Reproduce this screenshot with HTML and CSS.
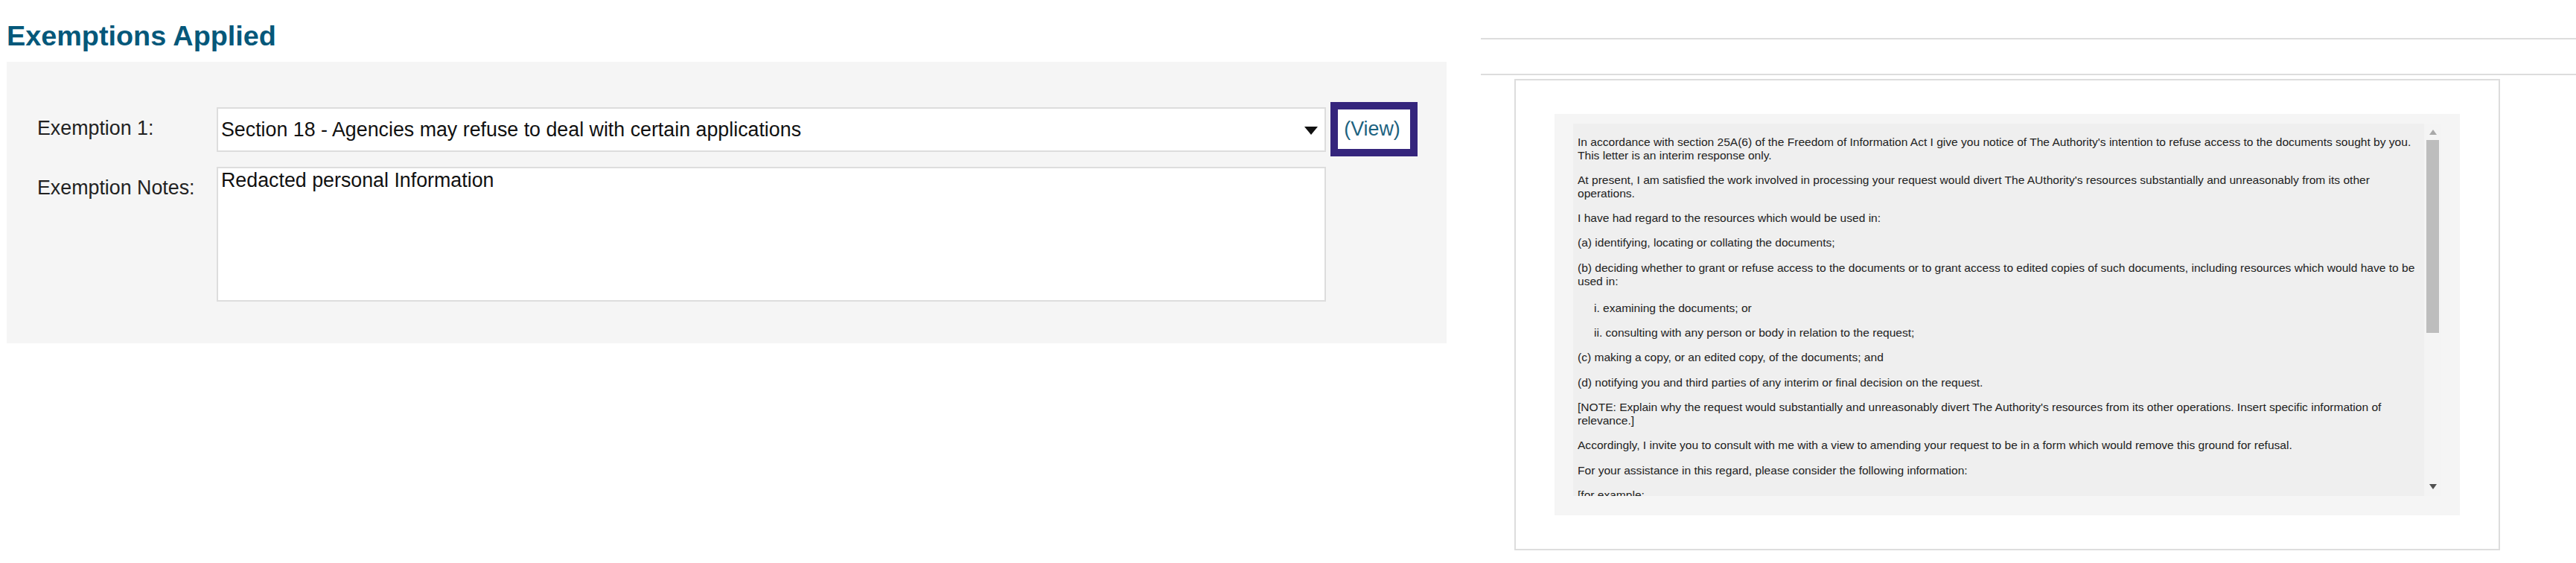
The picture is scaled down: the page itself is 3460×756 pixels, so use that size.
FILE: index.html
```html
<!DOCTYPE html>
<html lang="en">

<head>
    <meta charset="UTF-8">
    <title>Exemptions Applied</title>
    <link rel="stylesheet" href="styles.css">
</head>

<body>
    <div class="page">
        <!-- Exemption form -->
        <div class="form-column">
            <h2 class="section-title">Exemptions Applied</h2>
            <div class="form-panel">
                <div class="form-row">
                    <label class="form-label" for="exemption-1">Exemption 1:</label>
                    <div class="select-wrap">
                        <select id="exemption-1" class="form-select">
                            <option>Section 18 - Agencies may refuse to deal with certain applications</option>
                        </select>
                        <svg class="select-arrow" viewBox="0 0 18 11">
                            <path d="M0 0H18L9 11Z" />
                        </svg>
                    </div>
                    <a class="view-link" href="#">(View)</a>
                </div>
                <div class="form-row notes-row">
                    <label class="form-label" for="exemption-notes">Exemption Notes:</label>
                    <textarea id="exemption-notes" class="form-notes">Redacted personal Information</textarea>
                </div>
            </div>
        </div>

        <!-- Letter preview -->
        <div class="preview-column">
            <div class="empty-bar"></div>
            <div class="letter-frame">
                <div class="letter-panel">
                    <div class="letter-box">
                        <div class="letter-text">
                            <p>In accordance with section 25A(6) of the Freedom of Information Act I give you notice of The Authority's intention to refuse access to the documents sought by you. This letter is an interim response only.</p>
                            <p>At present, I am satisfied the work involved in processing your request would divert The AUthority's resources substantially and unreasonably from its other operations.</p>
                            <p>I have had regard to the resources which would be used in:</p>
                            <p>(a) identifying, locating or collating the documents;</p>
                            <p>(b) deciding whether to grant or refuse access to the documents or to grant access to edited copies of such documents, including resources which would have to be used in:</p>
                            <div class="sub-list">
                                <p>i. examining the documents; or</p>
                                <p>ii. consulting with any person or body in relation to the request;</p>
                            </div>
                            <p>(c) making a copy, or an edited copy, of the documents; and</p>
                            <p>(d) notifying you and third parties of any interim or final decision on the request.</p>
                            <p>[NOTE: Explain why the request would substantially and unreasonably divert The Authority's resources from its other operations. Insert specific information of relevance.]</p>
                            <p>Accordingly, I invite you to consult with me with a view to amending your request to be in a form which would remove this ground for refusal.</p>
                            <p>For your assistance in this regard, please consider the following information:</p>
                            <p>[for example:</p>
                        </div>
                        <div class="scrollbar">
                            <svg class="scroll-arrow" viewBox="0 0 10 7">
                                <path d="M5 0L10 7H0Z" fill="#a8a8a8" />
                            </svg>
                            <div class="scroll-thumb"></div>
                            <svg class="scroll-arrow" viewBox="0 0 10 7">
                                <path d="M0 0H10L5 7Z" fill="#505050" />
                            </svg>
                        </div>
                    </div>
                </div>
            </div>
        </div>
    </div>
</body>

</html>
```

FILE: styles.css
```css
/* Global Styles */
* {
    margin: 0;
    padding: 0;
    box-sizing: border-box;
    font-family: 'Liberation Sans', Arial, sans-serif;
}

body {
    background-color: #fff;
    color: #222;
}

.page {
    display: flex;
    width: 3460px;
    height: 756px;
    overflow: hidden;
}

/* Form Styles */
.form-column {
    width: 1934px;
    margin-left: 9px;
    flex-shrink: 0;
}

.section-title {
    height: 74px;
    margin-bottom: 9px;
    padding-top: 27px;
    font-size: 37.8px;
    line-height: 43px;
    font-weight: bold;
    color: #05587a;
}

.form-panel {
    height: 378px;
    padding-top: 54px;
    background-color: #f5f5f5;
}

.form-row {
    display: flex;
    align-items: center;
    height: 73px;
}

.notes-row {
    align-items: flex-start;
    height: 181px;
    margin-top: 14px;
}

.form-label {
    width: 282px;
    padding: 0 0 3px 41px;
    font-size: 26.8px;
    line-height: 31px;
    color: #222;
    flex-shrink: 0;
}

.notes-row .form-label {
    padding-top: 13px;
}

.select-wrap {
    position: relative;
    width: 1490px;
    height: 60px;
}

.form-select {
    display: block;
    width: 100%;
    height: 100%;
    padding: 0 40px 0 4px;
    appearance: none;
    background-color: #fff;
    border: 2px solid #ddd;
    border-radius: 0;
    font-size: 26.8px;
    color: #111;
}

.select-arrow {
    position: absolute;
    top: 26px;
    right: 11px;
    width: 18px;
    height: 11px;
    fill: #111;
}

.view-link {
    width: 117px;
    height: 73px;
    margin-left: 6px;
    padding-right: 5px;
    border: 10px solid #35257c;
    background-color: #fff;
    font-size: 26.8px;
    line-height: 53px;
    text-align: center;
    color: #1c6280;
    text-decoration: none;
}

.form-notes {
    display: block;
    width: 1490px;
    height: 181px;
    padding: 1px 4px;
    background-color: #fff;
    border: 2px solid #ddd;
    border-radius: 0;
    resize: none;
    font-size: 26.8px;
    line-height: 31px;
    color: #111;
}

/* Letter Preview */
.preview-column {
    margin-left: 46px;
    flex-grow: 1;
}

.empty-bar {
    height: 50px;
    margin-top: 51px;
    border-top: 2px solid #ddd;
    border-bottom: 2px solid #ddd;
}

.letter-frame {
    width: 1324px;
    height: 633px;
    margin: 5px 0 0 45px;
    padding: 45px 52px;
    border: 2px solid #ddd;
}

.letter-panel {
    height: 539px;
    padding: 13px 25px;
    background-color: #f5f5f5;
}

.letter-box {
    display: flex;
    height: 500px;
    background-color: #efefef;
}

.letter-text {
    flex-grow: 1;
    height: 100%;
    padding: 15.5px 0 0 6px;
    overflow: hidden;
    font-size: 15.55px;
    line-height: 18px;
    color: #222;
}

.letter-text p {
    margin-bottom: 15.33px;
}

.sub-list {
    padding: 2.7px 0 0 22px;
}

/* Scrollbar */
.scrollbar {
    display: flex;
    flex-direction: column;
    align-items: center;
    width: 23px;
    height: 100%;
    padding-top: 8px;
    background-color: #f4f4f4;
    flex-shrink: 0;
}

.scroll-arrow {
    display: block;
    width: 10px;
    height: 7px;
}

.scroll-thumb {
    width: 17px;
    height: 259px;
    margin: 7px 0 203px;
    background-color: #bdbdbd;
}
```
